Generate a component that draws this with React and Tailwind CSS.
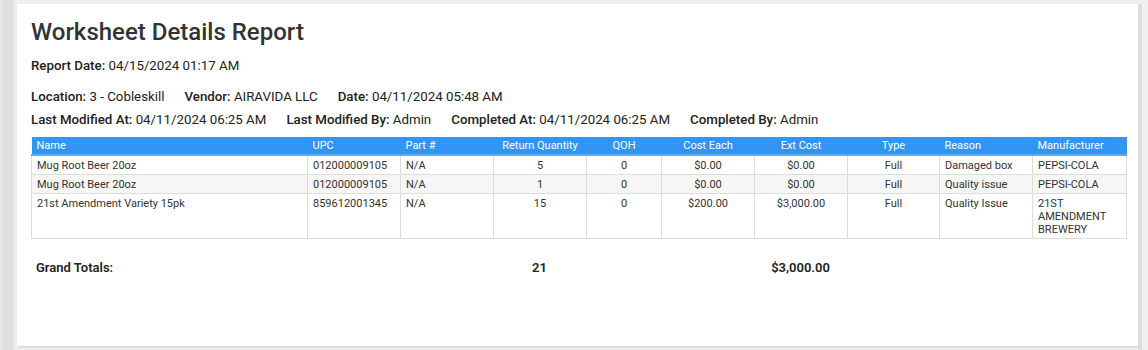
import React from 'react';

const columns = [
  { key: 'name', label: 'Name', w: 'w-[276px]', align: 'text-left' },
  { key: 'upc', label: 'UPC', w: 'w-[93px]', align: 'text-left' },
  { key: 'part', label: 'Part #', w: 'w-[93px]', align: 'text-left' },
  { key: 'qty', label: 'Return Quantity', w: 'w-[93px]', align: 'text-center' },
  { key: 'qoh', label: 'QOH', w: 'w-[75px]', align: 'text-center' },
  { key: 'cost', label: 'Cost Each', w: 'w-[93px]', align: 'text-center' },
  { key: 'ext', label: 'Ext Cost', w: 'w-[93px]', align: 'text-center' },
  { key: 'type', label: 'Type', w: 'w-[92px]', align: 'text-center' },
  { key: 'reason', label: 'Reason', w: 'w-[93px]', align: 'text-left' },
  { key: 'mfr', label: 'Manufacturer', w: 'w-[94px]', align: 'text-left' },
];

const rows = [
  { name: 'Mug Root Beer 20oz', upc: '012000009105', part: 'N/A', qty: '5', qoh: '0', cost: '$0.00', ext: '$0.00', type: 'Full', reason: 'Damaged box', mfr: 'PEPSI-COLA' },
  { name: 'Mug Root Beer 20oz', upc: '012000009105', part: 'N/A', qty: '1', qoh: '0', cost: '$0.00', ext: '$0.00', type: 'Full', reason: 'Quality issue', mfr: 'PEPSI-COLA' },
  { name: '21st Amendment Variety 15pk', upc: '859612001345', part: 'N/A', qty: '15', qoh: '0', cost: '$200.00', ext: '$3,000.00', type: 'Full', reason: 'Quality Issue', mfr: '21ST AMENDMENT BREWERY', tall: true },
];

const Field = ({ label, value }) => (
  <span>
    <span className="font-medium">{label}:</span> {value}
  </span>
);

export default function App() {
  return (
    <div className="w-[1148px] h-[350px] bg-[#efefef] flex font-['Roboto',sans-serif] text-[#222] overflow-hidden">
      <div className="w-[3px] bg-[#e6e6e6]" />
      <div className="w-[11px] bg-[#dedede] border-r border-[#e9e9e9]" />
      <div className="w-[3px] bg-[#ececec]" />
      <div className="flex flex-col">
        <div className="h-[4px]" />
        <div className="w-[1121px] h-[342px] bg-white px-[14px] pt-[13px] shadow-[1px_1px_2px_rgba(0,0,0,0.15)]">
          <h1 className="text-[24px] font-medium leading-[30px] text-[#333]">Worksheet Details Report</h1>
          <div className="mt-[11px] text-[13.3px] leading-[16px]">
            <Field label="Report Date" value="04/15/2024 01:17 AM" />
          </div>
          <div className="mt-[15px] text-[13.3px] leading-[16px] flex gap-[20px]">
            <Field label="Location" value="3 - Cobleskill" />
            <Field label="Vendor" value="AIRAVIDA LLC" />
            <Field label="Date" value="04/11/2024 05:48 AM" />
          </div>
          <div className="mt-[7px] text-[13.3px] leading-[16px] flex gap-[20px]">
            <Field label="Last Modified At" value="04/11/2024 06:25 AM" />
            <Field label="Last Modified By" value="Admin" />
            <Field label="Completed At" value="04/11/2024 06:25 AM" />
            <Field label="Completed By" value="Admin" />
          </div>
          <table className="mt-[9px] border-collapse table-fixed w-[1095px] text-[11px] leading-[13px]">
            <thead>
              <tr className="bg-[#3196f3] text-white">
                {columns.map((c) => (
                  <th key={c.key} className={`${c.w} ${c.align} font-normal px-[5px] h-[18px] border-b-2 border-[#5aacf5]`}>
                    {c.label}
                  </th>
                ))}
              </tr>
            </thead>
            <tbody>
              {rows.map((r, i) => (
                <tr key={i} className={i === 1 ? 'bg-[#f6f6f6]' : 'bg-white'}>
                  {columns.map((c) => (
                    <td
                      key={c.key}
                      className={`${c.align} align-top px-[5px] pt-[3px] border border-[#dddddd] text-[#333] ${r.tall ? 'h-[45px]' : 'h-[19px]'}`}
                    >
                      {r[c.key]}
                    </td>
                  ))}
                </tr>
              ))}
            </tbody>
          </table>
          <table className="mt-[21px] table-fixed w-[1095px] text-[13px] leading-[16px] font-semibold text-[#222]">
            <tbody>
              <tr>
                {columns.map((c) => (
                  <td key={c.key} className={`${c.w} px-[5px] ${c.key === 'name' ? 'text-left' : 'text-center'}`}>
                    {c.key === 'name' ? 'Grand Totals:' : c.key === 'qty' ? '21' : c.key === 'ext' ? '$3,000.00' : ''}
                  </td>
                ))}
              </tr>
            </tbody>
          </table>
        </div>
      </div>
      <div className="w-[4px] bg-[#dcdcdc] mt-[4px]" />
    </div>
  );
}
